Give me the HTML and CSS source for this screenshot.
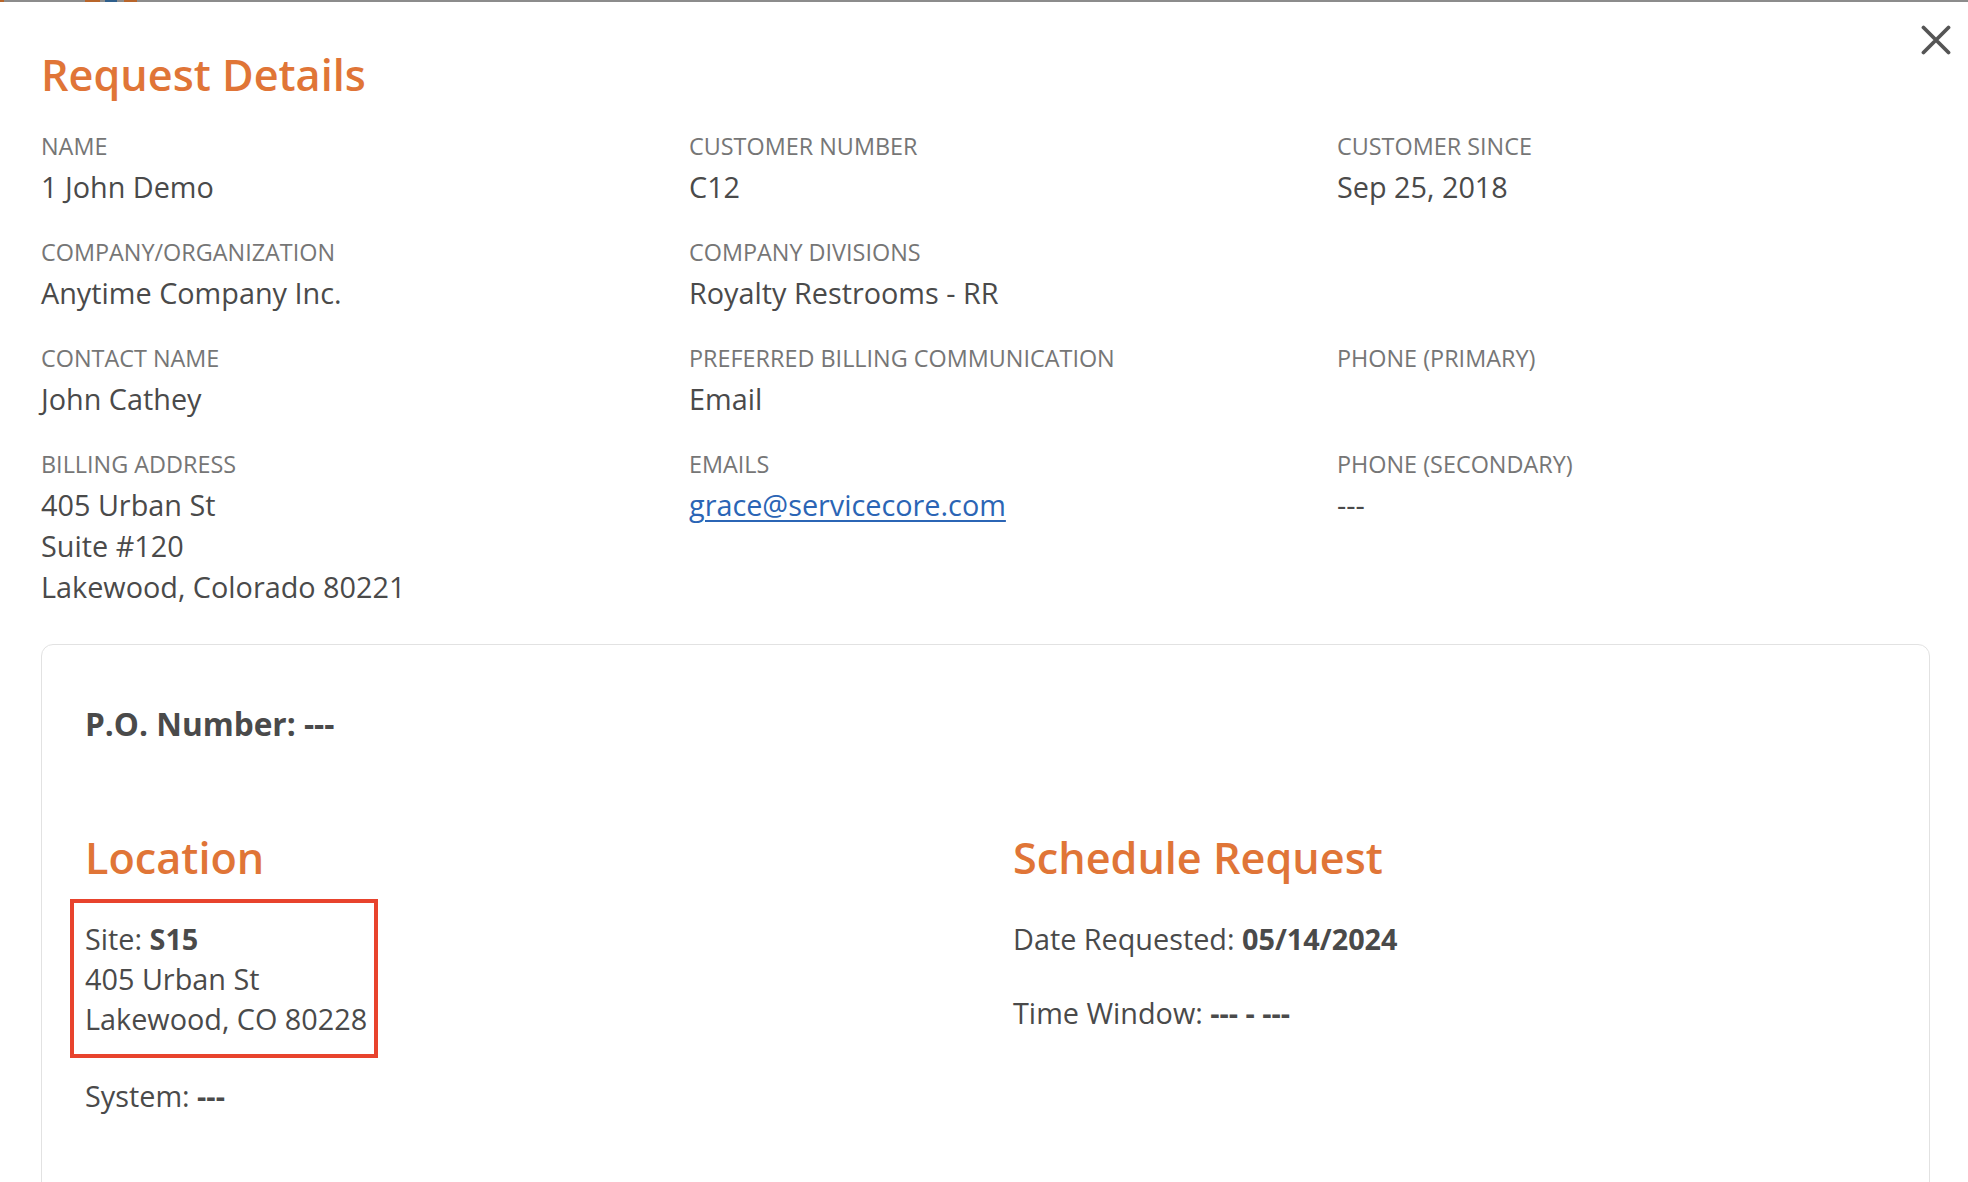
FILE: index.html
```html
<!DOCTYPE html>
<html lang="en">
<head>
<meta charset="utf-8">
<title>Request Details</title>
<link rel="stylesheet" href="styles.css">
</head>
<body>
<div class="backdrop-strip">
  <span class="seg seg-orange seg-a"></span>
  <span class="seg seg-orange seg-b"></span>
  <span class="seg seg-blue seg-c"></span>
  <span class="seg seg-orange seg-d"></span>
</div>
<div class="modal">
  <button class="close" aria-label="Close">
    <svg viewBox="0 0 30 30" width="30" height="30"><path d="M2.5 2.5 L27.5 27.5 M27.5 2.5 L2.5 27.5" stroke="#555" stroke-width="3.8" stroke-linecap="round" fill="none"/></svg>
  </button>
  <h1 class="title">Request Details</h1>
  <div class="info-grid">
    <div class="field"><div class="label">NAME</div><div class="value">1 John Demo</div></div>
    <div class="field"><div class="label">CUSTOMER NUMBER</div><div class="value">C12</div></div>
    <div class="field"><div class="label">CUSTOMER SINCE</div><div class="value">Sep 25, 2018</div></div>

    <div class="field"><div class="label">COMPANY/ORGANIZATION</div><div class="value">Anytime Company Inc.</div></div>
    <div class="field"><div class="label">COMPANY DIVISIONS</div><div class="value">Royalty Restrooms - RR</div></div>
    <div class="field"></div>

    <div class="field"><div class="label">CONTACT NAME</div><div class="value">John Cathey</div></div>
    <div class="field"><div class="label">PREFERRED BILLING COMMUNICATION</div><div class="value">Email</div></div>
    <div class="field"><div class="label">PHONE (PRIMARY)</div><div class="value">&nbsp;</div></div>

    <div class="field"><div class="label">BILLING ADDRESS</div><div class="value">405 Urban St<br>Suite #120<br>Lakewood, Colorado 80221</div></div>
    <div class="field"><div class="label">EMAILS</div><div class="value"><a class="link" href="#">grace@servicecore.com</a></div></div>
    <div class="field"><div class="label">PHONE (SECONDARY)</div><div class="value">---</div></div>
  </div>

  <div class="card">
    <div class="po">P.O. Number: ---</div>
    <div class="sections">
      <div class="loc-col">
        <h2 class="section-title">Location</h2>
        <div class="site-box">
          <div class="line">Site: <b>S15</b></div>
          <div class="line">405 Urban St</div>
          <div class="line">Lakewood, CO 80228</div>
        </div>
        <div class="line system">System: <b>---</b></div>
      </div>
      <div class="sched-col">
        <h2 class="section-title">Schedule Request</h2>
        <div class="line date">Date Requested: <b>05/14/2024</b></div>
        <div class="line window">Time Window: <b>--- - ---</b></div>
      </div>
    </div>
  </div>
</div>
</body>
</html>
```

FILE: styles.css
```css
* { box-sizing: border-box; }

html, body {
  margin: 0;
  padding: 0;
  background: #ffffff;
  overflow: hidden;
}

body {
  font-family: "Open Sans", "Noto Sans", sans-serif;
  color: #4a4a4a;
}

.backdrop-strip {
  height: 2px;
  background: #8c8c8c;
  display: flex;
}

.seg { height: 2px; display: block; }
.seg-orange { background: #b8652a; }
.seg-blue { background: #2f5f8c; }
.seg-a { width: 4px; margin-left: 0; }
.seg-b { width: 15px; margin-left: 81px; }
.seg-c { width: 12px; margin-left: 5px; }
.seg-d { width: 13px; margin-left: 7px; }

.modal {
  position: relative;
  padding: 48px 38px 0 41px;
}

.close {
  position: absolute;
  top: 23px;
  right: 17px;
  width: 30px;
  height: 30px;
  padding: 0;
  border: 0;
  background: transparent;
  cursor: pointer;
}

.close svg { display: block; }

.title {
  margin: 0;
  font-size: 43.2px;
  line-height: 50px;
  font-weight: 600;
  color: #e07537;
}

.info-grid {
  margin-top: 32px;
  display: grid;
  grid-template-columns: 648px 648px 1fr;
  row-gap: 31px;
}

.label {
  font-size: 23.4px;
  line-height: 28px;
  color: #767676;
}

.value {
  margin-top: 6px;
  font-size: 28.8px;
  line-height: 41px;
  color: #4a4a4a;
}

.link {
  color: #2b65b5;
  text-decoration: underline;
  text-underline-offset: 4px;
  text-decoration-thickness: 2px;
}

.card {
  margin-top: 37px;
  border: 1px solid #e2e2e2;
  border-radius: 12px;
  padding: 59px 43px 120px 43px;
}

.po {
  font-size: 31.6px;
  line-height: 40px;
  font-weight: 700;
  color: #4a4a4a;
}

.sections {
  margin-top: 89px;
  display: flex;
}

.loc-col { width: 928px; }

.section-title {
  margin: 0;
  font-size: 43.2px;
  line-height: 50px;
  font-weight: 600;
  color: #e07537;
}

.line {
  font-size: 28.8px;
  line-height: 40px;
  color: #4a4a4a;
}

.line b { font-weight: 700; }

.site-box {
  display: inline-block;
  margin-top: 16px;
  margin-left: -15px;
  border: 4px solid #e8432d;
  padding: 16px 7px 15px 11px;
}

.system { margin-top: 18px; }

.date { margin-top: 36px; }
.window { margin-top: 34px; }
```
